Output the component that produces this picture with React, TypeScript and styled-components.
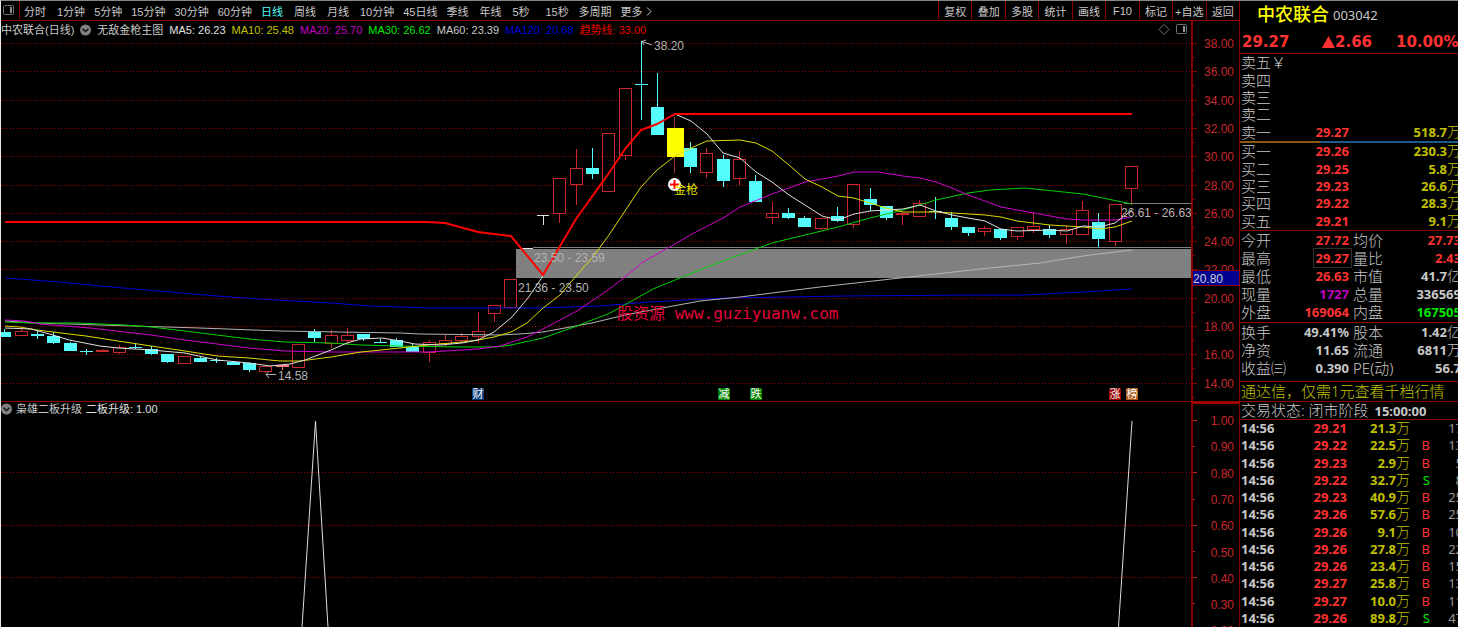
import React from "react";
import styled, { createGlobalStyle } from "styled-components";

const cjk = `"Noto Sans CJK SC", sans-serif`;
const sans = `"Liberation Sans", ${cjk}`;
const figures = `"Noto Sans", ${cjk}`;

const c = {
  line: "#8a0000",
  axis: "#c8282d",
  red: "#ff3232",
  text: "#c8c8c8",
  grey: "#969696",
  yellow: "#c0c000",
  cyan: "#54fcfc",
  green: "#00e600",
  magenta: "#c000c0",
  blue: "#0000dc",
  white: "#e0e0e0",
  grid: "#a00000",
};

const GlobalStyle = createGlobalStyle`
  body { margin: 0; background: #000; }
  *, *::before, *::after { box-sizing: border-box; }
  button { font: inherit; color: inherit; background: none; border: 0; padding: 0; cursor: pointer; }
`;

/* ---------- page ---------- */

const Page = styled.div`
  display: flex;
  height: 100vh;
  overflow: hidden;
  border-top: 1px solid #868686;
  border-left: 1px solid #e8e8e8;
  background: #000;
  color: ${c.text};
  font-family: ${sans};
  font-size: 11px;
`;

const Main = styled.main`
  flex: 1;
  min-width: 0;
  display: flex;
  flex-direction: column;
`;

const Toolbar = styled.nav`
  display: flex;
  flex: none;
  height: 20px;
  border-bottom: 1px solid ${c.line};
`;

const LayoutButton = styled.button`
  width: 19px;
  border-right: 1px solid ${c.line};
  padding-left: 2px;
  display: flex;
  align-items: center;
`;

const Periods = styled.div`
  flex: 1;
  display: flex;
  align-items: center;
  gap: 9px;
  padding-left: 4px;
`;

const Period = styled.button<{ $active?: boolean }>`
  min-width: 24px;
  text-align: left;
  white-space: nowrap;
  color: ${(p) => (p.$active ? c.cyan : c.text)};
`;

const Tools = styled.div`
  display: grid;
  grid-template-columns: repeat(9, 1fr);
  width: 301px;
`;

const Tool = styled.button`
  border-left: 1px solid ${c.line};
  white-space: nowrap;
`;

/* ---------- chart panels ---------- */

const Panel = styled.section`
  display: grid;
  grid-template-columns: 1fr 46px;
  flex: none;
`;

const SignalPanel = styled(Panel)`
  border-top: 1px solid ${c.line};
`;

const Plot = styled.div`
  min-width: 0;
  border-right: 2px solid ${c.line};
`;

const Axis = styled.div<{ $framed?: boolean }>`
  border-top: ${(p) => (p.$framed ? `2px solid #a80000` : "0")};
`;

const Legend = styled.div<{ $compact?: boolean }>`
  display: flex;
  align-items: center;
  gap: ${(p) => (p.$compact ? 4 : 6)}px;
  height: 18px;
  padding-bottom: ${(p) => (p.$compact ? 4 : 1)}px;
  line-height: 14px;
  white-space: nowrap;
`;

const LegendItem = styled.span<{ $color?: string }>`
  color: ${(p) => p.$color ?? c.text};
`;

const LegendTools = styled.span`
  margin-left: auto;
  display: flex;
  gap: 6px;
  padding-right: 3px;
`;

const Drawing = styled.svg`
  display: block;
  width: 100%;
  height: auto;
  text {
    font-family: ${sans};
    font-size: 12px;
  }
`;

/* ---------- quote sidebar ---------- */

const Sidebar = styled.aside`
  flex: none;
  width: 219px;
  border-left: 1px solid ${c.line};
  overflow: hidden;
  display: flex;
  flex-direction: column;
  font-family: ${figures};
  font-size: 13px;
`;

const Block = styled.section`
  flex: none;
  width: 221px;
  padding-left: 1px;
  border-bottom: 1px solid ${c.line};
`;

const PlainBlock = styled(Block)`
  border-bottom: 0;
`;

const StockName = styled.h1`
  display: flex;
  align-items: center;
  gap: 4px;
  margin: 0;
  height: 26px;
  padding-left: 16px;
  color: #ffff00;
  font-size: 18px;
  font-weight: 500;
  line-height: 26px;
`;

const StockCode = styled.span`
  color: ${c.text};
  font-size: 13px;
  font-weight: 400;
  padding-top: 2px;
`;

const Headline = styled.div`
  display: grid;
  grid-template-columns: 80px 74px 1fr;
  align-items: center;
  height: 26px;
  padding: 3px 0 0 1px;
  color: ${c.red};
  font-family: "DejaVu Sans", sans-serif;
  font-size: 15px;
  font-weight: 700;
  white-space: nowrap;
`;

const Change = styled.span`
  display: flex;
  align-items: center;
`;

const Book = styled.table`
  width: 100%;
  height: 87px;
  border-collapse: collapse;
  table-layout: fixed;
`;

const Label = styled.th`
  padding: 0;
  width: 34px;
  text-align: left;
  color: ${c.text};
  font-size: 15px;
  font-weight: 300;
  line-height: 17px;
  white-space: nowrap;
`;

const Inset = styled.span`
  padding-left: 4px;
`;

const Figure = styled.td<{ $color?: string; $width?: number }>`
  padding: 0;
  width: ${(p) => (p.$width ? `${p.$width}px` : "auto")};
  text-align: right;
  color: ${(p) => p.$color ?? c.text};
  font-weight: 700;
  line-height: 17px;
  white-space: nowrap;
`;

const Unit = styled.span`
  font-size: 14px;
  font-weight: 300;
  line-height: 1;
`;

const Boxed = styled.span`
  outline: 1px solid #303030;
  padding: 0 2px;
  margin-right: -2px;
`;

const Spread = styled.div`
  flex: none;
  height: 2px;
  background: linear-gradient(to right, #8a5a14 80px, #1e5a8c 80px);
`;

const Stats = styled.table<{ $height: number; $gap?: number }>`
  width: 100%;
  height: ${(p) => p.$height}px;
  margin-bottom: ${(p) => p.$gap ?? 0}px;
  border-collapse: collapse;
  table-layout: fixed;
`;

const Promo = styled(Block).attrs({ as: "a", href: "#quotes" })`
  display: block;
  height: 20px;
  line-height: 19px;
  color: ${c.yellow};
  font-size: 15px;
  font-weight: 300;
  text-decoration: none;
  white-space: nowrap;
`;

const Status = styled(Block)`
  height: 18px;
  line-height: 16px;
  font-size: 15px;
  font-weight: 300;
  white-space: nowrap;
  strong {
    padding-left: 2px;
    font-size: 13px;
    font-weight: 700;
  }
`;

const TickArea = styled.div`
  flex: 1;
  display: flex;
`;

const Ticks = styled.table`
  flex: 1;
  width: 222px;
  margin-left: 1px;
  border-collapse: collapse;
  table-layout: fixed;
`;

const Tick = styled.td<{ $color?: string; $w: number; $align?: string; $light?: boolean }>`
  padding: 0;
  width: ${(p) => p.$w}px;
  text-align: ${(p) => p.$align ?? "right"};
  color: ${(p) => p.$color ?? c.text};
  font-weight: ${(p) => (p.$light ? 400 : 700)};
  line-height: 17px;
  white-space: nowrap;
`;

/* ---------- data ---------- */

const periods = ["分时", "1分钟", "5分钟", "15分钟", "30分钟", "60分钟", "日线", "周线", "月线", "10分钟", "45日线", "季线", "年线", "5秒", "15秒", "多周期"];
const tools = ["复权", "叠加", "多股", "统计", "画线", "F10", "标记", "+自选", "返回"];

const averages: [string, string][] = [
  ["MA5: 26.23", c.white],
  ["MA10: 25.48", c.yellow],
  ["MA20: 25.70", c.magenta],
  ["MA30: 26.62", c.green],
  ["MA60: 23.39", c.text],
  ["MA120: 20.68", c.blue],
  ["趋势线: 33.00", "#e60000"],
];

// kind, body top, body bottom, wick top, wick bottom
type Candle = [string, number, number, number, number];
const candles: Candle[] = [
  ["d", 332, 337, 329, 337], ["u", 331, 335, 327, 335], ["d", 334, 336, 331, 339], ["d", 336, 343, 332, 344],
  ["d", 343, 351, 342, 351], ["d", 351, 352, 349, 355], ["f", 350, 352, 349, 352], ["u", 347, 352, 345, 353],
  ["d", 347, 348, 344, 349], ["d", 349, 354, 346, 355], ["d", 354, 362, 354, 363], ["u", 356, 363, 356, 363],
  ["d", 358, 362, 357, 362], ["d", 360, 361, 358, 363], ["d", 362, 365, 361, 365], ["d", 363, 370, 362, 372],
  ["u", 366, 371, 365, 372], ["p", 365, 367, 365, 370], ["u", 344, 367, 344, 367], ["d", 332, 338, 329, 342],
  ["u", 335, 343, 330, 347], ["u", 335, 340, 328, 344], ["d", 334, 339, 334, 341], ["d", 342, 343, 339, 343],
  ["d", 340, 347, 338, 347], ["d", 347, 352, 344, 352], ["u", 342, 352, 340, 361], ["u", 340, 343, 335, 346],
  ["u", 336, 340, 333, 342], ["u", 331, 336, 312, 342], ["u", 305, 313, 305, 321], ["u", 279, 307, 279, 308],
  ["w", 248, 249, 248, 248], ["w", 215, 216, 215, 225], ["u", 178, 213, 178, 222], ["u", 168, 184, 149, 204],
  ["d", 168, 174, 148, 179], ["u", 133, 191, 133, 191], ["u", 88, 155, 88, 159], ["d", 84, 85, 41, 120],
  ["d", 107, 135, 73, 135], ["y", 128, 157, 117, 173], ["d", 148, 167, 142, 173], ["u", 153, 172, 148, 177],
  ["d", 159, 181, 155, 187], ["u", 159, 178, 151, 184], ["d", 181, 202, 175, 202], ["u", 213, 217, 202, 223],
  ["d", 213, 218, 208, 219], ["d", 218, 227, 216, 227], ["u", 218, 228, 218, 229], ["d", 216, 221, 207, 222],
  ["u", 184, 224, 184, 227], ["d", 199, 205, 188, 211], ["d", 206, 218, 206, 220], ["f", 213, 215, 212, 225],
  ["u", 203, 216, 200, 216], ["d", 211, 212, 197, 219], ["d", 218, 227, 212, 230], ["d", 227, 233, 227, 236],
  ["u", 228, 231, 226, 235], ["d", 229, 238, 229, 240], ["u", 227, 236, 227, 239], ["u", 226, 229, 212, 232],
  ["d", 229, 235, 225, 238], ["u", 229, 234, 225, 243], ["u", 210, 234, 201, 234], ["d", 222, 239, 213, 247],
  ["u", 204, 241, 204, 245], ["u", 166, 188, 166, 204],
];

const lines: { color: string; width?: number; points: string }[] = [
  { color: c.blue, points: "5,278 60,282 100,286 170,292 217,296 260,299 331,303 370,306 430,308 540,308 600,306 650,302 725,298 845,296 980,295 1025,295 1083,292 1132,289" },
  { color: "#b4b4b4", points: "5,321 37,323 100,325 200,328 280,331 400,333 420,334 500,335 520,334 543,332 592,323 625,315 657,309 700,301 740,297 820,287 900,278 980,269 1040,263 1083,256 1132,250" },
  { color: "#00d200", points: "5,322 31,323 78,323 125,325 151,327 185,331 217,335 249,339 285,342 331,343 361,345 400,346 462,347 495,347 511,345 543,338 577,326 592,320 608,314 630,302 653,289 707,267 750,251 772,243 805,235 838,227 870,218 903,210 936,200 968,193 990,190 1025,188 1083,194 1132,204" },
  { color: "#d200d2", points: "5,320 25,321 40,324 90,328 151,335 185,340 217,344 249,348 285,351 331,352 428,352 462,350 478,349 500,346 527,337 543,329 577,311 608,290 625,277 643,262 675,244 692,234 725,217 740,207 755,201 772,194 789,188 805,182 822,179 838,176 854,172 878,172 903,176 920,178 936,182 952,188 968,195 985,201 1001,207 1034,213 1067,219 1083,220 1115,220 1132,217" },
  { color: "#dcdc00", points: "5,326 20,327 37,330 69,334 86,336 118,341 151,346 185,351 217,356 249,358 280,361 300,361 331,357 361,352 400,348 428,345 462,342 478,340 494,337 511,332 527,323 543,308 560,295 576,276 592,258 609,235 641,187 657,170 675,156 691,148 707,141 740,140 756,143 772,151 789,165 805,179 822,187 838,196 854,198 870,203 886,208 903,212 936,212 985,215 1001,217 1017,221 1050,225 1067,226 1083,227 1099,229 1115,227 1132,221" },
  { color: c.white, points: "5,328 31,329 53,335 69,340 100,346 118,348 151,350 185,353 217,360 249,363 270,366 290,364 305,360 331,350 347,343 361,339 382,338 400,341 415,344 440,345 462,343 478,340 494,332 512,317 528,298 543,276" },
  { color: c.white, points: "675,114 691,121 707,134 723,153 740,158 756,172 772,182 789,195 805,205 822,216 838,220 854,214 870,211 886,210 903,209 920,205 936,211 952,215 968,218 985,221 1001,229 1017,231 1050,230 1067,231 1083,226 1099,227 1115,223 1132,210" },
  { color: "#ff0000", width: 2, points: "5,222 428,222 445,223 478,232 494,234 511,236 543,275 576,219 609,173 625,149 641,130 657,124 675,114 1132,114" },
];

const events: [number, string, string][] = [
  [477, "财", "#0c3c78"],
  [723, "减", "#008000"],
  [755, "跌", "#008000"],
  [1114, "涨", "#960000"],
  [1131, "榜", "#aa5a14"],
];

const sells = ["卖五￥", "卖四", "卖三", "卖二", "卖一"];
const buys = [
  ["买一", "29.26", "230.3"],
  ["买二", "29.25", "5.8"],
  ["买三", "29.23", "26.6"],
  ["买四", "29.22", "28.3"],
  ["买五", "29.21", "9.1"],
];

type Stat = [string, string, string, string, string, string, string];
const stats: Stat[] = [
  ["今开", "27.72", c.red, "均价", "27.73", "", c.red],
  ["最高", "29.27", c.red, "量比", "2.43", "", c.red],
  ["最低", "26.63", c.red, "市值", "41.7", "亿", c.text],
  ["现量", "1727", c.magenta, "总量", "336569", "", c.text],
  ["外盘", "169064", c.red, "内盘", "167505", "", c.green],
];
const fundamentals: Stat[] = [
  ["换手", "49.41%", c.text, "股本", "1.42", "亿", c.text],
  ["净资", "11.65", c.text, "流通", "6811", "万", c.text],
  ["收益㈢", "0.390", c.text, "PE(动)", "56.7", "", c.text],
];

const ticks = [
  ["29.21", "21.3", "", "17"], ["29.22", "22.5", "B", "13"], ["29.23", "2.9", "B", "5"], ["29.22", "32.7", "S", "8"],
  ["29.23", "40.9", "B", "25"], ["29.26", "57.6", "B", "25"], ["29.26", "9.1", "B", "10"], ["29.26", "27.8", "B", "22"],
  ["29.26", "23.4", "B", "15"], ["29.27", "25.8", "B", "13"], ["29.27", "10.0", "B", "11"], ["29.26", "89.8", "S", "47"],
];

const gridRows = Array.from({ length: 13 }, (_, i) => Math.round(43 + i * 28.3));

/* ---------- pieces ---------- */

const PanelIcon = () => (
  <svg width="12" height="11" viewBox="0 0 12 11" fill="none" stroke="#707070">
    <rect x="0.5" y="0.5" width="10" height="9" rx="1" />
    <rect x="7" y="2" width="2" height="6" fill="#909090" stroke="none" />
  </svg>
);

const DiamondIcon = () => (
  <svg width="12" height="11" viewBox="0 0 12 11" fill="none" stroke="#707070">
    <path d="M6 0.5 11 5.5 6 10.5 1 5.5Z" />
  </svg>
);

const MenuDot = () => (
  <svg width="11" height="12" viewBox="0 0 11 12">
    <circle cx="5.5" cy="6" r="5.5" fill="#808080" />
    <path d="M2.5 4.8 5.5 7.6 8.5 4.8" fill="none" stroke="#101010" strokeWidth="1.4" />
  </svg>
);

const MoreArrow = () => (
  <svg width="6" height="9" viewBox="0 0 6 9" fill="none" stroke={c.text}>
    <path d="M1 0.5 5 4.5 1 8.5" />
  </svg>
);

function CandleMark({ index, candle }: { index: number; candle: Candle }) {
  const [kind, top, bottom, high, low] = candle;
  const x = Math.round(4.2 + index * 16.33);
  if (kind === "w")
    return (
      <g fill={c.white}>
        <rect x={x - 6} y={top} width="12" height="1" />
        <rect x={x} y={top} width="1" height={low - top} />
      </g>
    );
  if (kind === "u")
    return (
      <g fill={c.axis}>
        <rect x={x} y={high} width="1" height={top - high} />
        <rect x={x} y={bottom} width="1" height={low - bottom + 1} />
        <rect x={x - 5.5} y={top + 0.5} width="12" height={bottom - top} fill="none" stroke={c.axis} />
      </g>
    );
  const fill = kind === "d" ? c.cyan : kind === "y" ? "#ffff00" : kind === "p" ? "#ff7878" : c.axis;
  return (
    <g>
      <rect x={x} y={high} width="1" height={low - high} fill={kind === "y" ? "#963232" : fill} />
      <rect x={kind === "y" ? x - 7 : x - 6} y={top} width={kind === "y" ? 17 : 13} height={bottom - top} fill={fill} />
    </g>
  );
}

function PriceChart() {
  return (
    <Drawing viewBox="1 39 1190 362" role="img" aria-label="日线">
      <g stroke={c.grid} strokeDasharray="1 2">
        {gridRows.map((y) => (
          <line key={y} x1="1" x2="1191" y1={y + 0.5} y2={y + 0.5} />
        ))}
      </g>
      <rect x="516" y="249" width="675" height="29" fill="#808080" />
      <path d="M533 247.5H1191M1124 203.5H1191" stroke="#808080" />
      {candles.map((k, i) => (
        <CandleMark key={i} index={i} candle={k} />
      ))}
      {lines.map((l, i) => (
        <polyline key={i} points={l.points} fill="none" stroke={l.color} strokeWidth={l.width ?? 1} />
      ))}
      <g fill="#b4b4b4">
        <text x="534" y="262">23.50 - 23.59</text>
        <text x="518" y="292">21.36 - 23.50</text>
        <text x="1121" y="217">26.61 - 26.63</text>
        <text x="654" y="50">38.20</text>
        <text x="278" y="380">14.58</text>
      </g>
      <path d="M652 45 642 41.5M646 40 642 41.5 644 45M276 374.5H266M269 371.5 266 374.5 269 378" fill="none" stroke="#b4b4b4" />
      <circle cx="674.5" cy="184.5" r="6.5" fill="#fff" />
      <path d="M670 184.5h9M674.5 180v9" stroke="#ff0000" strokeWidth="2" />
      <text x="674" y="194" fill="#e6e600">金枪</text>
      <Watermark x="617" y="319">股资源 www.guziyuanw.com</Watermark>
      {events.map(([x, label, color]) => (
        <g key={label}>
          <rect x={x - 5} y="388" width="12" height="12" fill={color} />
          <EventText x={x + 1} y="398">{label}</EventText>
        </g>
      ))}
    </Drawing>
  );
}

const Watermark = styled.text`
  && {
    fill: #e6003c;
    font-family: "DejaVu Sans Mono", ${cjk};
    font-size: 16px;
  }
`;

const EventText = styled.text`
  && {
    fill: #fff;
    font-size: 11px;
    text-anchor: middle;
  }
`;

function PriceAxis() {
  return (
    <Drawing viewBox="1193 21 46 380">
      {gridRows.map((y, i) => (
        <g key={y} fill={c.axis}>
          <rect x="1193" y={y} width="4" height="1" fill={c.line} />
          <rect x="1193" y={y + 14} width="2" height="1" fill={c.line} />
          <text x="1234" y={y + 5} textAnchor="end">{(38 - i * 2).toFixed(2)}</text>
        </g>
      ))}
      <rect x="1191" y="271" width="50" height="15" fill="#000090" />
      <path d="M1191 270.5H1241M1191 285.5H1241" stroke={c.line} />
      <text x="1193" y="283" fill="#d0d0d0">20.80</text>
    </Drawing>
  );
}

function SignalChart() {
  return (
    <Drawing viewBox="1 420 1190 207" role="img" aria-label="二板升级">
      <path d="M1 472.5H1191M1 525.5H1191M1 577.5H1191" stroke={c.grid} strokeDasharray="1 2" />
      <path d="M302 627 315.5 421 328 627M1118.5 627 1132 421" fill="none" stroke="#dcdcdc" />
    </Drawing>
  );
}

function SignalAxis() {
  return (
    <Drawing viewBox="1193 404 46 223">
      {Array.from({ length: 9 }, (_, i) => (
        <g key={i} fill={c.axis}>
          <rect x="1193" y={Math.round(420 + i * 26.2)} width={i % 2 ? 2 : 4} height="1" />
          <text x="1234" y={Math.round(425 + i * 26.3)} textAnchor="end">{(1 - i * 0.1).toFixed(2)}</text>
        </g>
      ))}
    </Drawing>
  );
}

function StatRows({ rows }: { rows: Stat[] }) {
  return (
    <tbody>
      {rows.map(([l1, v1, c1, l2, v2, unit, c2]) => (
        <tr key={l1}>
          <Label scope="row">{l1}</Label>
          <Figure $width={74} $color={c1}>{l1 === "最高" ? <Boxed>{v1}</Boxed> : v1}</Figure>
          <Label scope="row"><Inset>{l2}</Inset></Label>
          <Figure $color={c2}>
            {v2}
            {unit && <Unit>{unit}</Unit>}
          </Figure>
        </tr>
      ))}
    </tbody>
  );
}

export default function App() {
  return (
    <>
      <GlobalStyle />
      <Page>
        <Main>
          <Toolbar>
            <LayoutButton aria-label="布局"><PanelIcon /></LayoutButton>
            <Periods>
              {periods.map((p) => (
                <Period key={p} $active={p === "日线"}>{p}</Period>
              ))}
              <Period>更多 <MoreArrow /></Period>
            </Periods>
            <Tools>
              {tools.map((t) => (
                <Tool key={t}>{t}</Tool>
              ))}
            </Tools>
          </Toolbar>

          <Panel>
            <Plot>
              <Legend>
                <LegendItem>中农联合(日线)</LegendItem>
                <MenuDot />
                <LegendItem>无敌金枪主图</LegendItem>
                {averages.map(([label, color]) => (
                  <LegendItem key={label} $color={color}>{label}</LegendItem>
                ))}
                <LegendTools>
                  <DiamondIcon />
                  <PanelIcon />
                </LegendTools>
              </Legend>
              <PriceChart />
            </Plot>
            <Axis><PriceAxis /></Axis>
          </Panel>

          <SignalPanel>
            <Plot>
              <Legend $compact>
                <MenuDot />
                <LegendItem>枭雄二板升级</LegendItem>
                <LegendItem $color={c.white}>二板升级: 1.00</LegendItem>
              </Legend>
              <SignalChart />
            </Plot>
            <Axis $framed><SignalAxis /></Axis>
          </SignalPanel>
        </Main>

        <Sidebar>
          <Block>
            <StockName>中农联合<StockCode>003042</StockCode></StockName>
            <Headline>
              <span>29.27</span>
              <Change>
                <svg width="13" height="12" viewBox="0 0 13 12"><path d="M6.5 0 13 12H0Z" fill={c.red} /></svg>
                2.66
              </Change>
              <span>10.00%</span>
            </Headline>
          </Block>

          <PlainBlock>
            <Book>
              <tbody>
                {sells.map((s, i) => (
                  <tr key={s}>
                    <Label scope="row">{s}</Label>
                    <Figure $width={74} $color={c.red}>{i === 4 && "29.27"}</Figure>
                    <Figure $color={c.yellow}>{i === 4 && <>518.7<Unit>万</Unit></>}</Figure>
                  </tr>
                ))}
              </tbody>
            </Book>
          </PlainBlock>
          <Spread />
          <Block>
            <Book>
              <tbody>
                {buys.map(([l, p, v]) => (
                  <tr key={l}>
                    <Label scope="row">{l}</Label>
                    <Figure $width={74} $color={c.red}>{p}</Figure>
                    <Figure $color={c.yellow}>{v}<Unit>万</Unit></Figure>
                  </tr>
                ))}
              </tbody>
            </Book>
          </Block>
          <Block>
            <Stats $height={91}><StatRows rows={stats} /></Stats>
          </Block>
          <Block>
            <Stats $height={55} $gap={3}><StatRows rows={fundamentals} /></Stats>
          </Block>
          <Promo>通达信，仅需1元查看千档行情</Promo>
          <Status>交易状态: 闭市阶段 <strong>15:00:00</strong></Status>
          <TickArea>
            <Ticks>
              <tbody>
                {ticks.map(([price, vol, side, count], i) => (
                  <tr key={i}>
                    <Tick $w={34} $align="left">14:56</Tick>
                    <Tick $w={72} $color={c.red}>{price}</Tick>
                    <Tick $w={63} $color={c.yellow}>{vol}<Unit>万</Unit></Tick>
                    <Tick $w={20} $color={side === "S" ? c.green : c.red} $light>{side}</Tick>
                    <Tick $w={33} $color={c.grey} $light>{count}</Tick>
                  </tr>
                ))}
              </tbody>
            </Ticks>
          </TickArea>
        </Sidebar>
      </Page>
    </>
  );
}
